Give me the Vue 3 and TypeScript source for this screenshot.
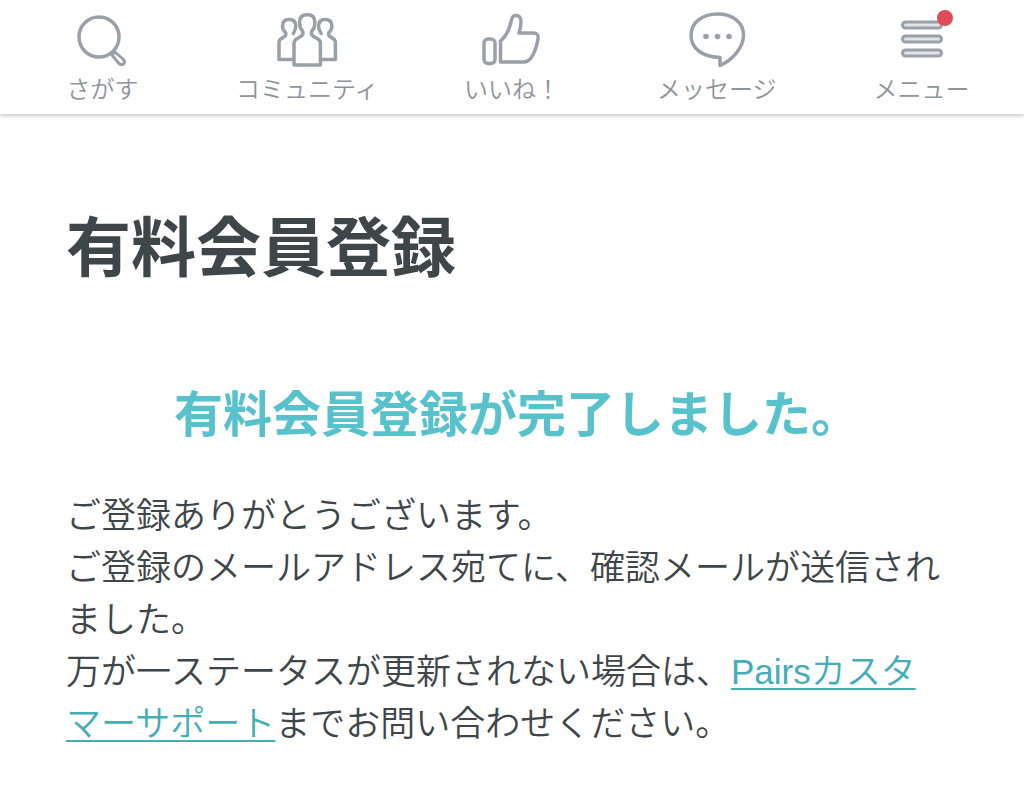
<script setup lang="ts">
type IconName = 'search' | 'community' | 'like' | 'message' | 'menu'

interface NavItem {
  icon: IconName
  label: string
  badge?: boolean
}

const items: NavItem[] = [
  { icon: 'search', label: 'さがす' },
  { icon: 'community', label: 'コミュニティ' },
  { icon: 'like', label: 'いいね！' },
  { icon: 'message', label: 'メッセージ' },
  { icon: 'menu', label: 'メニュー', badge: true },
]
</script>

<template>
  <div class="page">
    <nav class="nav">
      <a v-for="item in items" :key="item.icon" class="nav-item" href="#">
        <span class="icon-box">
          <svg class="icon" viewBox="0 0 64 60" fill="none" stroke="#9aa0a8" stroke-width="3.5" stroke-linejoin="round" stroke-linecap="round" aria-hidden="true">
            <g v-if="item.icon === 'search'">
              <circle cx="29" cy="33" r="20" />
              <path d="M41.500 50.500 Q43.500 49.500 45 48 L53.500 55.500 Q55.500 58 53.500 60 Q51.500 61.500 49 59.500 Z" stroke-width="3" />
            </g>
            <g v-else-if="item.icon === 'community'">
              <path d="M18 55.500 H4 V38.500 Q4 36 6.500 34.500 L9.500 32.500 Q11.500 31 10.500 28.500 Q7.500 26 7.500 22 Q7.500 15.500 14.200 15.500 Q20.800 15.500 20.800 22 Q20.800 26 18.300 29.500" />
              <path d="M46.400 55.500 H60.400 V38.500 Q60.400 36 57.900 34.500 L54.900 32.500 Q52.900 31 53.900 28.500 Q56.900 26 56.900 22 Q56.900 15.500 50.200 15.500 Q43.600 15.500 43.600 22 Q43.600 26 46.100 29.500" />
              <path d="M19 61 V39.500 Q19 36.500 21.500 35 L26.500 32 Q29 30 27.500 27 Q24.500 24 24.500 18.500 Q24.500 10.800 32.200 10.800 Q39.900 10.800 39.900 18.500 Q39.900 24 36.900 27 Q35.400 30 37.900 32 L42.900 35 Q45.400 36.500 45.400 39.500 V61 Z" />
            </g>
            <g v-else-if="item.icon === 'like'">
              <rect x="4" y="35" width="11" height="24.500" rx="4" />
              <path d="M20.500 58 V37 Q28 31 31 18 Q32 11.500 35.500 11.500 Q41 11.500 41 17.500 Q41 23 39 29 H53 Q59 29 58 35 Q56 47 51 54 Q48 58 44 58 Z" />
            </g>
            <g v-else-if="item.icon === 'message'">
              <path d="M35 61.500 V53.500 C17 53 6 44 6 31.500 C6 18 18 10 32.500 10 C47 10 58.500 18 58.500 31 C58.500 44 47 56 35 61.500 Z" />
              <g fill="#9aa0a8" stroke="none">
                <circle cx="21" cy="32.500" r="2.800" />
                <circle cx="32.500" cy="32.500" r="2.800" />
                <circle cx="44" cy="32.500" r="2.800" />
              </g>
            </g>
            <g v-else fill="#e1e3e6" stroke-width="3">
              <rect x="12.500" y="18" width="39" height="6" rx="3" />
              <rect x="12.500" y="32" width="39" height="6" rx="3" />
              <rect x="12.500" y="46" width="39" height="6" rx="3" />
            </g>
          </svg>
          <span v-if="item.badge" class="badge"></span>
        </span>
        <span class="label">{{ item.label }}</span>
      </a>
    </nav>

    <main class="content">
      <h1 class="title">有料会員登録</h1>
      <h2 class="subtitle">有料会員登録が完了しました。</h2>
      <p class="message">
        ご登録ありがとうございます。<br />
        ご登録のメールアドレス宛てに、確認メールが送信されました。<br />
        万が一ステータスが更新されない場合は、<a class="link" href="#">Pairsカスタマーサポート</a>までお問い合わせください。
      </p>
    </main>
  </div>
</template>

<style>
body {
  margin: 0;
  background: #fff;
}
</style>

<style scoped>
.page {
  font-family: "Liberation Sans", "Noto Sans CJK JP", sans-serif;
  color: #3f4649;
}

.nav {
  display: grid;
  grid-template-columns: repeat(5, 1fr);
  padding: 4px 0 6px;
  background: #fff;
  box-shadow: 0 1px 5px rgba(0, 0, 0, 0.3);
}

.nav-item {
  display: flex;
  flex-direction: column;
  align-items: center;
  color: #8f949b;
  text-decoration: none;
}

.icon-box {
  position: relative;
  width: 64px;
  height: 68px;
}

.icon {
  display: block;
  width: 64px;
  height: 60px;
  overflow: visible;
}

.badge {
  position: absolute;
  top: 6px;
  right: 1px;
  width: 16px;
  height: 16px;
  border-radius: 50%;
  background: #df4b56;
}

.label {
  font-size: 24px;
  font-weight: 350;
  line-height: 36px;
  white-space: nowrap;
}

.content {
  padding: 86px 56px 40px 66px;
}

.title {
  margin: 0;
  font-size: 65px;
  font-weight: 700;
  line-height: 98px;
}

.subtitle {
  margin: 80px 0 38px;
  font-size: 49px;
  font-weight: 700;
  line-height: 74px;
  text-align: center;
  color: #58c2cc;
}

.message {
  margin: 0;
  padding-right: 20px;
  font-size: 35px;
  font-weight: 350;
  line-height: 52px;
}

.link {
  color: #45adb7;
  text-decoration: underline;
  text-decoration-thickness: 2px;
  text-underline-offset: 4px;
}
</style>
